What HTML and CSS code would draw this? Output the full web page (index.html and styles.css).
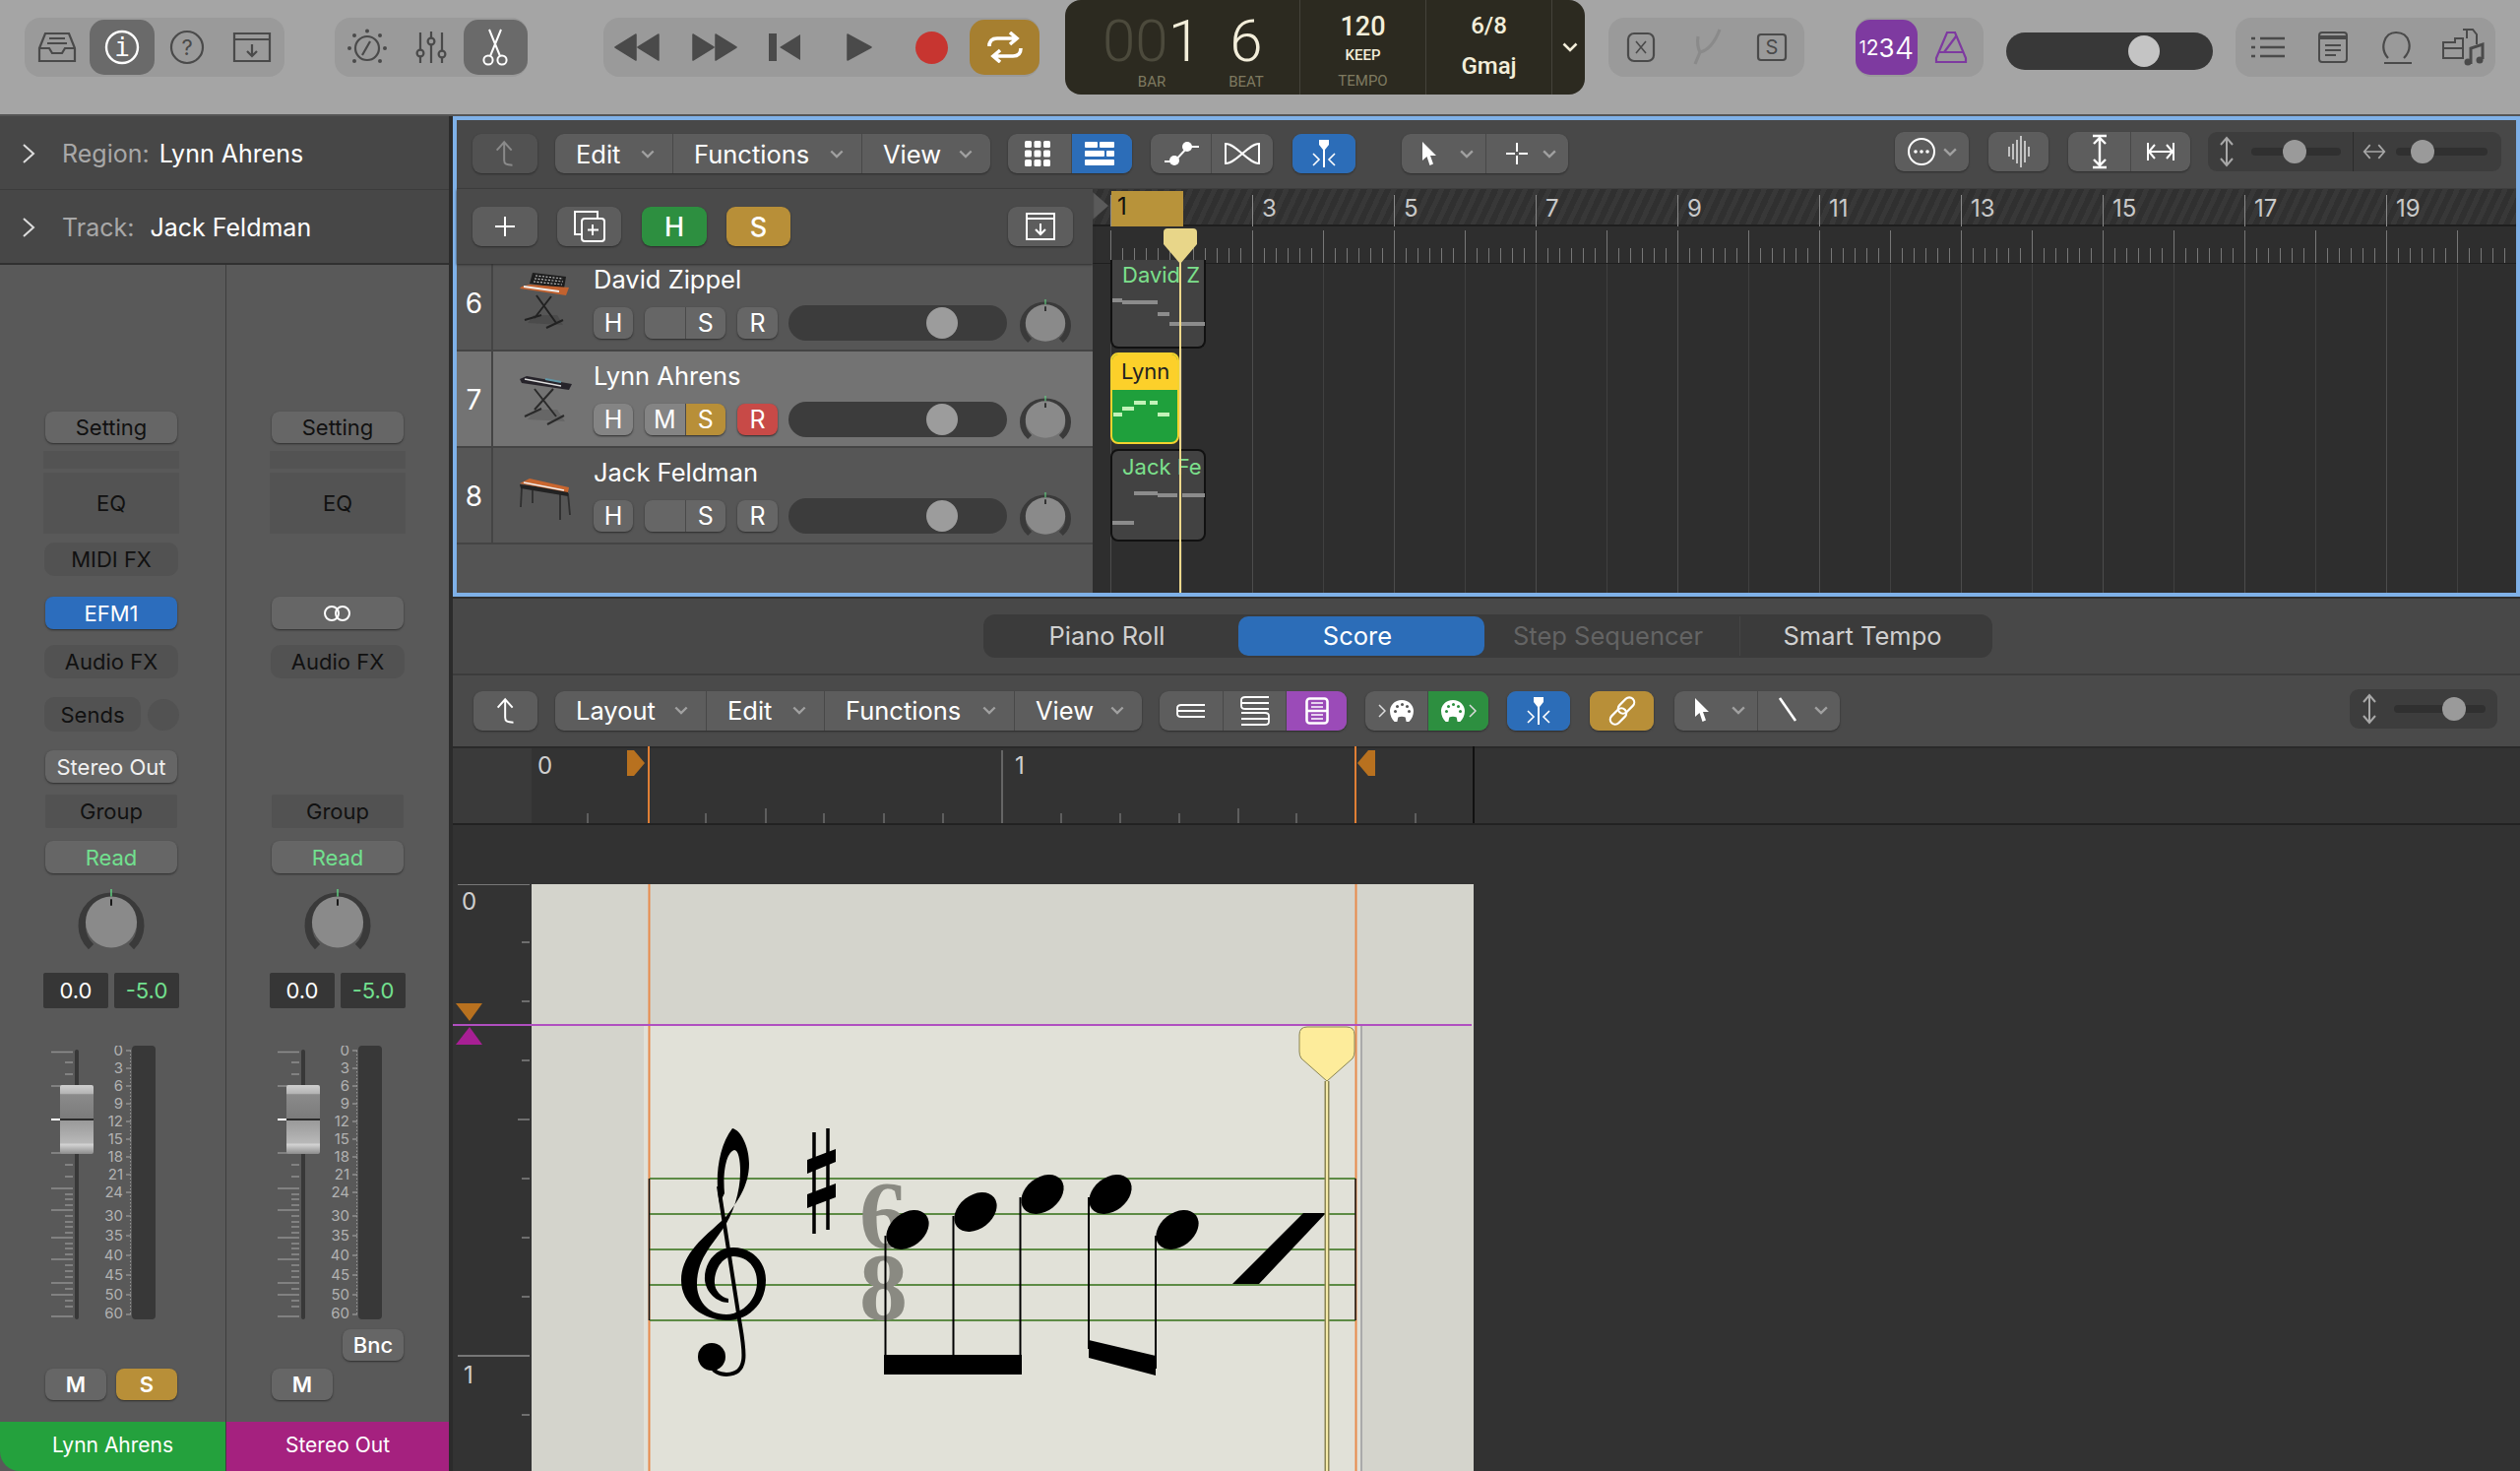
FILE: index.html
```html
<!DOCTYPE html>
<html lang="en">

<head>
    <meta charset="UTF-8">
    <title>Logic Pro</title>
    <link rel="stylesheet" href="styles.css">
</head>

<body>
    <svg class="defs" width="0" height="0">
        <defs>
            <linearGradient id="cap" x1="0" y1="0" x2="0" y2="1">
                <stop offset="0" stop-color="#cfcfcf" />
                <stop offset=".12" stop-color="#b5b5b5" />
                <stop offset=".14" stop-color="#8a8a8a" />
                <stop offset=".48" stop-color="#7c7c7c" />
                <stop offset=".49" stop-color="#2c2c2c" />
                <stop offset=".51" stop-color="#2c2c2c" />
                <stop offset=".52" stop-color="#9a9a9a" />
                <stop offset=".84" stop-color="#b8b8b8" />
                <stop offset=".86" stop-color="#d4d4d4" />
                <stop offset="1" stop-color="#8c8c8c" />
            </linearGradient>
            <symbol id="chev" viewBox="0 0 16 10">
                <path d="M1.5 1.5 8 8 14.500 1.500" fill="none" stroke="currentColor" stroke-width="2.600" />
            </symbol>
            <symbol id="pointer" viewBox="0 0 16 25">
                <path d="M1 0 V19 L5.500 15 L8.500 24 L12 22.500 L9 14 H15 Z" fill="currentColor" />
            </symbol>
            <symbol id="catch" viewBox="0 0 26 28">
                <path d="M8 0 H18 V5 L14 10 V28 H12 V10 L8 5 Z" fill="currentColor" />
                <path d="M2 14 8 20 2 26 M24 14 18 20 24 26" fill="none" stroke="currentColor" stroke-width="1.600" />
            </symbol>
            <symbol id="upback" viewBox="0 0 24 32">
                <path d="M2 12 11 2 20 12 M11 2 V24 C11 29 14 30 21 30" fill="none" stroke="currentColor" stroke-width="2.400" />
            </symbol>
            <symbol id="updown" viewBox="0 0 16 32">
                <path d="M2 9 8 2 14 9 M2 23 8 30 14 23 M8 2 V30" fill="none" stroke="currentColor" stroke-width="2" />
            </symbol>
            <symbol id="leftright" viewBox="0 0 28 20">
                <path d="M9 2 2 10 9 18 M19 2 26 10 19 18 M2 10 H26" fill="none" stroke="currentColor" stroke-width="2" />
            </symbol>
            <symbol id="knob" viewBox="0 0 72 72">
                <path d="M14 63 A32 32 0 1 1 58 63" fill="none" stroke="#3a3a3a" stroke-width="8" />
                <circle cx="36" cy="36" r="28" fill="#8a8a8a" />
                <path d="M36 0 V8" stroke="#62d884" stroke-width="1.500" />
                <path d="M36 11 V18" stroke="#111" stroke-width="2" />
            </symbol>
            <symbol id="midi" viewBox="0 0 28 26">
                <path d="M14 1 C22 1 27 7 27 13 C27 18 25 22 22 25 L19 25 L18 20 C16 19 12 19 10 20 L9 25 L6 25 C3 22 1 18 1 13 C1 7 6 1 14 1 Z" fill="#fff" />
            </symbol>
        </defs>
    </svg>

    <div class="app">
        <!-- top control bar -->
        <header class="topbar">
            <div class="tgroup tg-view">
                <div class="tbtn"><svg class="ic" width="40" height="32" viewBox="0 0 40 32"><path d="M2 17 8 2 H32 L38 17 V30 H2 Z M2 17 H12 L15 22 H25 L28 17 H38 M12 7 H28 M10 12 H30" fill="none" stroke="currentColor" stroke-width="2.200" /></svg></div>
                <div class="tbtn active"><svg width="36" height="36" viewBox="0 0 36 36"><circle cx="18" cy="18" r="16" fill="none" stroke="#fff" stroke-width="2.400" /><text x="18" y="27" class="svgtxt mono">i</text></svg></div>
                <div class="tbtn"><svg class="ic" width="36" height="36" viewBox="0 0 36 36"><circle cx="18" cy="18" r="16" fill="none" stroke="currentColor" stroke-width="2.200" /><text x="18" y="26" class="svgtxt q">?</text></svg></div>
                <div class="tbtn"><svg class="ic" width="40" height="32" viewBox="0 0 40 32"><path d="M2 2 H38 V30 H2 Z M2 8 H38 M20 13 V25 M15 20 20 25 25 20" fill="none" stroke="currentColor" stroke-width="2.200" /></svg></div>
            </div>
            <div class="tgroup tg-tools">
                <div class="tbtn"><svg class="ic" width="42" height="38" viewBox="0 0 42 38"><circle cx="21" cy="20" r="12" fill="none" stroke="currentColor" stroke-width="2.200" /><path d="M16 27 24 13" stroke="currentColor" stroke-width="2.200" /><g fill="currentColor"><circle cx="21" cy="2.500" r="2" /><circle cx="8" cy="7" r="2" /><circle cx="34" cy="7" r="2" /><circle cx="3" cy="20" r="2" /><circle cx="39" cy="20" r="2" /><circle cx="8" cy="33" r="2" /><circle cx="34" cy="33" r="2" /></g></svg></div>
                <div class="tbtn"><svg class="ic" width="32" height="34" viewBox="0 0 32 34"><g fill="none" stroke="currentColor" stroke-width="2.200"><path d="M5 2 V19 M5 27 V33 M16 1 V8 M16 15 V33 M27 2 V21 M27 28 V33" /><circle cx="5" cy="23" r="3.400" /><circle cx="16" cy="11" r="3.400" /><circle cx="27" cy="24" r="3.400" /></g></svg></div>
                <div class="tbtn active"><svg width="26" height="38" viewBox="0 0 26 38"><g fill="none" stroke="#fff" stroke-width="2"><circle cx="6" cy="32" r="4.600" /><circle cx="20" cy="32" r="4.600" /><path d="M8 28 19 1 M18 28 7 1" /></g></svg></div>
            </div>
            <div class="tgroup tg-transport">
                <div class="tbtn t1"><svg class="ic" width="46" height="28" viewBox="0 0 46 28"><path d="M22 1 1 14 22 27 Z M45 1 24 14 45 27 Z" fill="currentColor" stroke="currentColor" stroke-width="1.500" stroke-linejoin="round" /></svg></div>
                <div class="tbtn t2"><svg class="ic" width="46" height="28" viewBox="0 0 46 28"><path d="M1 1 22 14 1 27 Z M24 1 45 14 24 27 Z" fill="currentColor" stroke="currentColor" stroke-width="1.500" stroke-linejoin="round" /></svg></div>
                <div class="tbtn t3"><svg class="ic" width="34" height="28" viewBox="0 0 34 28"><path d="M1 0 H9 V28 H1 Z M33 1 12 14 33 27 Z" fill="currentColor" /></svg></div>
                <div class="tbtn t4"><svg class="ic" width="26" height="28" viewBox="0 0 26 28"><path d="M1 1 25 14 1 27 Z" fill="currentColor" stroke="currentColor" stroke-width="1.500" stroke-linejoin="round" /></svg></div>
                <div class="tbtn t5"><div class="rec"></div></div>
                <div class="tbtn t6"><svg width="38" height="32" viewBox="0 0 38 32"><path d="M3 15 C3 10 5 7 11 7 H29 M3 15 V12 M35 17 C35 22 33 25 27 25 H9 M24 1 31 7 24 13 M14 19 7 25 14 31" fill="none" stroke="#fff" stroke-width="3.600" /></svg></div>
            </div>

            <div class="lcd">
                <div class="lcd-pos">
                    <div class="lcd-col lcd-bar">
                        <div class="lcd-big"><span class="dim">00</span>1</div>
                        <div class="lcd-lab">BAR</div>
                    </div>
                    <div class="lcd-col lcd-beat">
                        <div class="lcd-big">6</div>
                        <div class="lcd-lab">BEAT</div>
                    </div>
                </div>
                <div class="lcd-cell">
                    <div class="lcd-val">120</div>
                    <div class="lcd-keep">KEEP</div>
                    <div class="lcd-lab">TEMPO</div>
                </div>
                <div class="lcd-cell sig">
                    <div class="lcd-val small">6/8</div>
                    <div class="lcd-val small">Gmaj</div>
                </div>
                <div class="lcd-more"><svg width="16" height="10"><use href="#chev" /></svg></div>
            </div>

            <div class="tgroup tg-mode">
                <div class="tbtn"><svg class="ic" width="30" height="32" viewBox="0 0 30 32"><rect x="2" y="2" width="26" height="28" rx="6" fill="none" stroke="currentColor" stroke-width="2.200" /><path d="M10 10 20 22 M20 10 10 22" stroke="currentColor" stroke-width="1.600" /></svg></div>
                <div class="tbtn off"><svg width="34" height="38" viewBox="0 0 34 38"><path d="M6 36 11 24 M11 24 C8 18 8 14 9 8 M11 24 C20 22 26 14 31 1" fill="none" stroke="#8a8a8a" stroke-width="3.200" /></svg></div>
                <div class="tbtn"><svg class="ic" width="32" height="30" viewBox="0 0 32 30"><rect x="2" y="2" width="28" height="26" rx="3" fill="none" stroke="currentColor" stroke-width="2.200" /><text x="16" y="22" class="svgtxt s">S</text></svg></div>
            </div>
            <div class="tgroup tg-count">
                <div class="count"><span class="c1">1</span><span class="c2">2</span><span class="c3">3</span><span class="c4">4</span></div>
                <div class="metro"><svg width="34" height="34" viewBox="0 0 34 34"><path d="M2 32 H32 V28 L21 2 H13 L2 28 Z M4 22 H30 M10 22 22 6" fill="none" stroke="#7e3aa0" stroke-width="2.200" /></svg></div>
            </div>
            <div class="master">
                <div class="master-knob"></div>
            </div>
            <div class="tgroup tg-lists">
                <div class="tbtn"><svg class="ic" width="34" height="24" viewBox="0 0 34 24"><g stroke="currentColor" stroke-width="2.400"><path d="M9 3 H34 M9 12 H34 M9 21 H34" /><path d="M0 3 H4 M0 12 H4 M0 21 H4" /></g></svg></div>
                <div class="tbtn"><svg class="ic" width="30" height="32" viewBox="0 0 30 32"><rect x="1" y="1" width="28" height="30" rx="3" fill="none" stroke="currentColor" stroke-width="2" /><path d="M1 4 H29 V8 H1 Z" fill="currentColor" /><path d="M7 14 H23 M7 19 H23 M7 24 H18" stroke="currentColor" stroke-width="2" /></svg></div>
                <div class="tbtn"><svg class="ic" width="36" height="34" viewBox="0 0 36 34"><path d="M8 28 C-1 18 4 2 16 2 C30 2 34 18 24 28 M4 33 H32" fill="none" stroke="currentColor" stroke-width="2.200" /></svg></div>
                <div class="tbtn"><svg class="ic" width="46" height="38" viewBox="0 0 44 38"><path d="M2 14 H14 V10 H22 V30 H2 Z M2 20 H22 M22 1 H32 L36 6 V16 M26 1 V10" fill="none" stroke="currentColor" stroke-width="2" /><path d="M30 36 V20 L42 16 V31" fill="none" stroke="currentColor" stroke-width="3" /><circle cx="27" cy="34" r="3.500" fill="currentColor" /><circle cx="39" cy="32" r="3.500" fill="currentColor" /></svg></div>
            </div>
        </header>

        <div class="main">
            <!-- inspector + channel strips -->
            <aside class="sidebar">
                <div class="insp-row">
                    <svg width="14" height="22" viewBox="0 0 14 22"><path d="M2 2 12 11 2 20" fill="none" stroke="#ddd" stroke-width="2" /></svg>
                    <span class="insp-lab">Region:</span><span class="insp-val">Lynn Ahrens</span>
                </div>
                <div class="insp-row track">
                    <svg width="14" height="22" viewBox="0 0 14 22"><path d="M2 2 12 11 2 20" fill="none" stroke="#ddd" stroke-width="2" /></svg>
                    <span class="insp-lab">Track:</span><span class="insp-val gap">Jack Feldman</span>
                </div>
                <div class="strips">
                    <section class="strip first">
                        <div class="ch-btn setting">Setting</div>
                        <div class="ch-slot"></div>
                        <div class="ch-eq">EQ</div>
                        <div class="ch-empty midi">MIDI FX</div>
                        <div class="ch-btn blue efm">EFM1</div>
                        <div class="ch-empty afx">Audio FX</div>
                        <div class="sends">
                            <div class="ch-empty">Sends</div>
                            <div class="send-dot"></div>
                        </div>
                        <div class="ch-btn out">Stereo Out</div>
                        <div class="ch-empty grp">Group</div>
                        <div class="ch-btn read">Read</div>
                        <svg class="pan" width="72" height="72"><use href="#knob" /></svg>
                        <div class="vals">
                            <div class="val">0.0</div>
                            <div class="val green">-5.0</div>
                        </div>
                        <svg class="fader" width="138" height="278" viewBox="44 1062 138 278">
                            <path class="ft" d="M52 1068.5H74M66 1079H74M66 1091H74M52 1103H74M52 1171H74M66 1183H74M66 1195H74M52 1207H74M66 1213H74M66 1218H74M66 1224H74M52 1229H74M66 1235H74M66 1241H74M66 1246H74M66 1252H74M52 1257H74M66 1263H74M66 1268H74M66 1274H74M52 1279H74M66 1285H74M66 1291H74M66 1297H74M52 1303H74M66 1309H74M52 1315H74M66 1321H74M66 1327H74M52 1337H74" />
                            <rect x="76" y="1066" width="4" height="274" rx="2" fill="#383838" />
                            <rect x="61" y="1102" width="34" height="70" rx="2" fill="url(#cap)" />
                            <path d="M52 1137H61" stroke="#fff" stroke-width="2" />
                            <g class="mt"><text x="125" y="1072">0</text><text x="125" y="1090">3</text><text x="125" y="1108">6</text><text x="125" y="1126">9</text><text x="125" y="1144">12</text><text x="125" y="1162">15</text><text x="125" y="1180">18</text><text x="125" y="1198">21</text><text x="125" y="1216">24</text><text x="125" y="1240">30</text><text x="125" y="1260">35</text><text x="125" y="1280">40</text><text x="125" y="1300">45</text><text x="125" y="1320">50</text><text x="125" y="1339">60</text></g>
                            <path class="ft" d="M128 1067H133M128 1085H133M128 1103H133M128 1121H133M128 1139H133M128 1157H133M128 1175H133M128 1193H133M128 1211H133M128 1235H133M128 1255H133M128 1275H133M128 1295H133M128 1315H133M128 1335H133" />
                            <path d="M132.500 1067V1335" stroke="#999" stroke-dasharray="1.500 2" />
                            <rect x="134" y="1062" width="24" height="278" rx="4" fill="#383838" />
                        </svg>
                        <div class="ch-btn bnc hide"></div>
                        <div class="ms">
                            <div class="ch-btn">M</div>
                            <div class="ch-btn gold">S</div>
                        </div>
                        <div class="ch-name green-bg">Lynn Ahrens</div>
                    </section>
                    <section class="strip">
                        <div class="ch-btn setting">Setting</div>
                        <div class="ch-slot"></div>
                        <div class="ch-eq">EQ</div>
                        <div class="ch-empty midi hide"></div>
                        <div class="ch-btn efm"><svg width="34" height="18" viewBox="0 0 34 18"><g fill="none" stroke="#fff" stroke-width="2"><circle cx="11" cy="9" r="7" /><circle cx="22" cy="9" r="7" /></g></svg></div>
                        <div class="ch-empty afx">Audio FX</div>
                        <div class="sends hide"></div>
                        <div class="ch-btn out hide"></div>
                        <div class="ch-empty grp">Group</div>
                        <div class="ch-btn read">Read</div>
                        <svg class="pan" width="72" height="72"><use href="#knob" /></svg>
                        <div class="vals">
                            <div class="val">0.0</div>
                            <div class="val green">-5.0</div>
                        </div>
                        <svg class="fader" width="138" height="278" viewBox="44 1062 138 278">
                            <path class="ft" d="M52 1068.5H74M66 1079H74M66 1091H74M52 1103H74M52 1171H74M66 1183H74M66 1195H74M52 1207H74M66 1213H74M66 1218H74M66 1224H74M52 1229H74M66 1235H74M66 1241H74M66 1246H74M66 1252H74M52 1257H74M66 1263H74M66 1268H74M66 1274H74M52 1279H74M66 1285H74M66 1291H74M66 1297H74M52 1303H74M66 1309H74M52 1315H74M66 1321H74M66 1327H74M52 1337H74" />
                            <rect x="76" y="1066" width="4" height="274" rx="2" fill="#383838" />
                            <rect x="61" y="1102" width="34" height="70" rx="2" fill="url(#cap)" />
                            <path d="M52 1137H61" stroke="#fff" stroke-width="2" />
                            <g class="mt"><text x="125" y="1072">0</text><text x="125" y="1090">3</text><text x="125" y="1108">6</text><text x="125" y="1126">9</text><text x="125" y="1144">12</text><text x="125" y="1162">15</text><text x="125" y="1180">18</text><text x="125" y="1198">21</text><text x="125" y="1216">24</text><text x="125" y="1240">30</text><text x="125" y="1260">35</text><text x="125" y="1280">40</text><text x="125" y="1300">45</text><text x="125" y="1320">50</text><text x="125" y="1339">60</text></g>
                            <path class="ft" d="M128 1067H133M128 1085H133M128 1103H133M128 1121H133M128 1139H133M128 1157H133M128 1175H133M128 1193H133M128 1211H133M128 1235H133M128 1255H133M128 1275H133M128 1295H133M128 1315H133M128 1335H133" />
                            <path d="M132.500 1067V1335" stroke="#999" stroke-dasharray="1.500 2" />
                            <rect x="134" y="1062" width="24" height="278" rx="4" fill="#383838" />
                        </svg>
                        <div class="ch-btn bnc">Bnc</div>
                        <div class="ms">
                            <div class="ch-btn">M</div>
                            <div class="ch-btn hide"></div>
                        </div>
                        <div class="ch-name purple-bg">Stereo Out</div>
                    </section>
                </div>
            </aside>

            <div class="work">
                <!-- tracks area -->
                <section class="tracks">
                    <div class="bar tracks-bar">
                        <div class="btn w66 dimmed"><svg width="20" height="28"><use href="#upback" /></svg></div>
                        <div class="seg ml18">
                            <div class="menu w119">Edit<svg width="14" height="9"><use href="#chev" /></svg></div>
                            <div class="menu w192">Functions<svg width="14" height="9"><use href="#chev" /></svg></div>
                            <div class="menu w131">View<svg width="14" height="9"><use href="#chev" /></svg></div>
                        </div>
                        <div class="seg ml18">
                            <div class="cell w64 nudge"><svg width="26" height="26" viewBox="0 0 26 26" fill="#fff"><rect width="7" height="7" rx="1.500" /><rect x="9.500" width="7" height="7" rx="1.500" /><rect x="19" width="7" height="7" rx="1.500" /><rect y="9.500" width="7" height="7" rx="1.500" /><rect x="9.500" y="9.500" width="7" height="7" rx="1.500" /><rect x="19" y="9.500" width="7" height="7" rx="1.500" /><rect y="19" width="7" height="7" rx="1.500" /><rect x="9.500" y="19" width="7" height="7" rx="1.500" /><rect x="19" y="19" width="7" height="7" rx="1.500" /></svg></div>
                            <div class="cell w62 c-blue nudge"><svg width="30" height="24" viewBox="0 0 30 24" fill="#fff"><rect width="13" height="6" rx="1" /><rect x="15" width="15" height="6" rx="1" /><rect y="9" width="20" height="6" rx="1" /><rect x="22" y="9" width="8" height="6" rx="1" /><rect y="18" width="30" height="6" rx="1" /></svg></div>
                        </div>
                        <div class="seg ml19">
                            <div class="cell w61"><svg width="38" height="26" viewBox="0 0 38 26"><path d="M2 21 H12 L26 6 H37" fill="none" stroke="#fff" stroke-width="2" /><circle cx="12" cy="20" r="5" fill="#fff" /><circle cx="25" cy="6" r="5" fill="#fff" /></svg></div>
                            <div class="cell w63"><svg width="36" height="22" viewBox="0 0 36 22"><path d="M1 1 V21 C12 21 24 1 35 1 V21 C24 21 12 1 1 1 Z" fill="none" stroke="#fff" stroke-width="2" /></svg></div>
                        </div>
                        <div class="seg ml20">
                            <div class="cell w64 c-blue"><svg class="white" width="26" height="28"><use href="#catch" /></svg></div>
                        </div>
                        <div class="seg ml47">
                            <div class="menu w85 icon-menu"><svg class="white" width="16" height="25"><use href="#pointer" /></svg><svg width="16" height="9"><use href="#chev" /></svg></div>
                            <div class="menu w84 icon-menu"><svg width="22" height="22" viewBox="0 0 22 22"><path d="M11 0 V9 M11 13 V22 M0 11 H9 M13 11 H22" stroke="#fff" stroke-width="2" /></svg><svg width="16" height="9"><use href="#chev" /></svg></div>
                        </div>
                        <div class="bar-right">
                            <div class="menu btn w75 icon-menu"><svg width="30" height="30" viewBox="0 0 30 30"><circle cx="15" cy="15" r="13" fill="none" stroke="#fff" stroke-width="2" /><circle cx="9" cy="15" r="1.800" fill="#fff" /><circle cx="15" cy="15" r="1.800" fill="#fff" /><circle cx="21" cy="15" r="1.800" fill="#fff" /></svg><svg width="16" height="9"><use href="#chev" /></svg></div>
                            <div class="btn w61 ml20"><svg width="24" height="34" viewBox="0 0 24 34"><path d="M2 12V22M6 9V25M10 5V29M14 1V33M18 6V28M22 12V22" stroke="#ddd" stroke-width="1.600" /></svg></div>
                            <div class="seg ml20">
                                <div class="cell w63"><svg width="22" height="36" viewBox="0 0 22 36"><path d="M4 2H18M4 34H18M11 2V34M5 10 11 4 17 10M5 26 11 32 17 26" fill="none" stroke="#fff" stroke-width="2.400" /></svg></div>
                                <div class="cell w61"><svg width="30" height="22" viewBox="0 0 30 22"><path d="M2 2V20M28 2V20M2 11H28M9 4 3 11 9 18M21 4 27 11 21 18" fill="none" stroke="#fff" stroke-width="2" /></svg></div>
                            </div>
                            <div class="zoomers ml18">
                                <div class="zoomer z1">
                                    <svg class="grey" width="16" height="32"><use href="#updown" /></svg>
                                    <div class="ztrack"><div class="zknob"></div></div>
                                </div>
                                <div class="zoomer z2">
                                    <svg class="grey" width="24" height="18"><use href="#leftright" /></svg>
                                    <div class="ztrack"><div class="zknob"></div></div>
                                </div>
                            </div>
                        </div>
                    </div>

                    <div class="tracks-body">
                        <div class="headers">
                            <div class="addbar">
                                <div class="btn w66"><svg width="22" height="22" viewBox="0 0 22 22"><path d="M11 1V21M1 11H21" stroke="#fff" stroke-width="2" /></svg></div>
                                <div class="btn w65 ml20"><svg width="34" height="34" viewBox="0 0 34 34"><g fill="none" stroke="#fff" stroke-width="2"><path d="M8 25 H2 V2 H25 V9" /><rect x="9" y="9" width="23" height="23" rx="3" /><path d="M20 15V26M15 20.500H26" /></g></svg></div>
                                <div class="btn w66 c-green ml21 big">H</div>
                                <div class="btn w65 c-gold ml20 big">S</div>
                                <div class="btn w66 add-last"><svg width="32" height="30" viewBox="0 0 32 30"><path d="M2 2H30V28H2ZM2 7H30M16 12V23M11 18 16 23 21 18" fill="none" stroke="#fff" stroke-width="2" /></svg></div>
                            </div>
                            <div class="rows">
                                <div class="row first">
                                    <div class="num">6</div>
                                    <svg class="inst" width="60" height="70" viewBox="0 0 60 70">
                                        <path d="M14 56 50 58 44 48 20 48Z" fill="#4b4b4b" />
                                        <path d="M23 28 43 56M38 29 21 51M11 53 28 48M33 61 50 53" stroke="#222" stroke-width="2" fill="none" />
                                        <path d="M19 5 53 9 51 21 16 16Z" fill="#1d1d1d" />
                                        <path d="M22 8 50 11M21 11 50 14M20 14 49 17" stroke="#b9b9b9" stroke-width="1.200" stroke-dasharray="2 1.500" />
                                        <path d="M8 19 16 17 56 20 53 28 6 21Z" fill="#c2622f" />
                                        <path d="M10 19 46 24" stroke="#eee" stroke-width="2" />
                                    </svg>
                                    <div class="ctl">
                                        <div class="tname">David Zippel</div>
                                        <div class="ctl-row">
                                            <div class="rbtn w40">H</div>
                                            <div class="mspair"><div class="rbtn half"></div><div class="rbtn half">S</div></div>
                                            <div class="rbtn w41">R</div>
                                            <div class="vol"><div class="vol-knob"></div></div>
                                            <svg class="tknob" width="52" height="48" preserveAspectRatio="none" viewBox="0 0 72 72"><use href="#knob" /></svg>
                                        </div>
                                    </div>
                                </div>
                                <div class="row sel">
                                    <div class="num">7</div>
                                    <svg class="inst" width="60" height="70" viewBox="0 0 60 70">
                                        <path d="M14 56 52 58 44 46 22 46Z" fill="#666" />
                                        <path d="M21 25 43 53M40 25 21 46M11 53 28 45M34 61 51 52" stroke="#2a2a2a" stroke-width="2" fill="none" />
                                        <path d="M6 15 13 12 59 20 56 26 8 19Z" fill="#26232a" />
                                        <path d="M11 15 48 22" stroke="#ddd" stroke-width="1.400" />
                                        <path d="M32 15 48 18" stroke="#5f96a6" stroke-width="2" />
                                    </svg>
                                    <div class="ctl">
                                        <div class="tname">Lynn Ahrens</div>
                                        <div class="ctl-row">
                                            <div class="rbtn w40">H</div>
                                            <div class="mspair"><div class="rbtn half">M</div><div class="rbtn half c-gold">S</div></div>
                                            <div class="rbtn w41 c-red">R</div>
                                            <div class="vol"><div class="vol-knob"></div></div>
                                            <svg class="tknob" width="52" height="48" preserveAspectRatio="none" viewBox="0 0 72 72"><use href="#knob" /></svg>
                                        </div>
                                    </div>
                                </div>
                                <div class="row">
                                    <div class="num">8</div>
                                    <svg class="inst" width="60" height="70" viewBox="0 0 60 70">
                                        <path d="M8 27 7 47M55 33 57 55M47 33 47 60M19 30 19 43" stroke="#2f2f2f" stroke-width="1.800" />
                                        <path d="M6 24 55 30 55 36 7 28Z" fill="#222" />
                                        <path d="M8 22 16 18 56 27 55 32 6 23Z" fill="#c9662f" />
                                        <path d="M10 22 51 30" stroke="#eee" stroke-width="1.600" />
                                    </svg>
                                    <div class="ctl">
                                        <div class="tname">Jack Feldman</div>
                                        <div class="ctl-row">
                                            <div class="rbtn w40">H</div>
                                            <div class="mspair"><div class="rbtn half"></div><div class="rbtn half">S</div></div>
                                            <div class="rbtn w41">R</div>
                                            <div class="vol"><div class="vol-knob"></div></div>
                                            <svg class="tknob" width="52" height="48" preserveAspectRatio="none" viewBox="0 0 72 72"><use href="#knob" /></svg>
                                        </div>
                                    </div>
                                </div>
                            </div>
                        </div>

                        <div class="timeline">
                            <div class="ruler-top">
                                <div class="rbar">1</div><div class="rbar">3</div><div class="rbar">5</div><div class="rbar">7</div><div class="rbar">9</div><div class="rbar">11</div><div class="rbar">13</div><div class="rbar">15</div><div class="rbar">17</div><div class="rbar">19</div>
                            </div>
                            <div class="ruler-low"></div>
                            <div class="lanes"></div>

                            <!-- things that sit on the timeline -->
                            <div class="cycle">1</div>
                            <div class="cycle-tip"></div>
                            <div class="region david">David Z</div>
                            <div class="region lynn"><div class="lynn-head">Lynn</div></div>
                            <div class="region jack">Jack Fe</div>
                            <svg class="dashes" width="120" height="300" viewBox="1110 268 120 300">
                                <g fill="#8c8c8c"><rect x="1130" y="303" width="10" height="4" /><rect x="1140" y="305" width="36" height="4" /><rect x="1176" y="317" width="12" height="4" /><rect x="1188" y="327" width="36" height="4" /><rect x="1152" y="499" width="24" height="4" /><rect x="1176" y="501" width="20" height="4" /><rect x="1201" y="501" width="23" height="4" /><rect x="1130" y="529" width="22" height="4" /></g>
                                <g fill="#c2f2b8"><rect x="1131" y="419" width="9" height="4" /><rect x="1140" y="413" width="12" height="4" /><rect x="1152" y="407" width="12" height="4" /><rect x="1168" y="407" width="8" height="4" /><rect x="1176" y="419" width="12" height="4" /></g>
                            </svg>
                            <div class="playline"></div>
                            <svg class="playhead" width="34" height="36" viewBox="0 0 34 36"><path d="M4 0 H30 Q34 0 34 4 V16 L17 36 L0 16 V4 Q0 0 4 0 Z" fill="#e8d689" /></svg>
                        </div>
                    </div>
                </section>

                <!-- score editor -->
                <section class="editor">
                    <div class="tabs-wrap">
                        <div class="tabs">
                            <div class="tab w259">Piano Roll</div>
                            <div class="tab w250 on">Score</div>
                            <div class="tab w259 off">Step Sequencer</div>
                            <div class="tab w257 line">Smart Tempo</div>
                        </div>
                    </div>
                    <div class="bar score-bar">
                        <div class="btn w65"><svg class="white" width="20" height="28"><use href="#upback" /></svg></div>
                        <div class="seg ml18">
                            <div class="menu w153">Layout<svg width="14" height="9"><use href="#chev" /></svg></div>
                            <div class="menu w120">Edit<svg width="14" height="9"><use href="#chev" /></svg></div>
                            <div class="menu w193">Functions<svg width="14" height="9"><use href="#chev" /></svg></div>
                            <div class="menu w130">View<svg width="14" height="9"><use href="#chev" /></svg></div>
                        </div>
                        <div class="seg ml18">
                            <div class="cell w64"><svg width="30" height="14" viewBox="0 0 30 14"><path d="M29 1H5Q1 1 1 4V10Q1 13 5 13H29M1 7H29" fill="none" stroke="#fff" stroke-width="1.800" /></svg></div>
                            <div class="cell w64"><svg width="30" height="30" viewBox="0 0 30 30"><path d="M29 1H5Q1 1 1 4V10Q1 13 5 13H29M1 7H29M1 17H25Q29 17 29 20V26Q29 29 25 29H1M1 23H29" fill="none" stroke="#fff" stroke-width="1.800" /></svg></div>
                            <div class="cell w62 c-purple"><svg width="24" height="28" viewBox="0 0 24 28"><rect x="1.500" y="1.500" width="21" height="25" rx="3" fill="none" stroke="#fff" stroke-width="2.600" /><path d="M2 14H22" stroke="#fff" stroke-width="2.600" /><path d="M6 6H18M6 10H18M6 18H18M6 22H18" stroke="#fff" stroke-width="1.400" /></svg></div>
                        </div>
                        <div class="seg ml19">
                            <div class="cell w63"><svg width="8" height="14" viewBox="0 0 8 14"><path d="M1 1 7 7 1 13" fill="none" stroke="#ddd" stroke-width="1.500" /></svg><div class="din"><svg width="26" height="24"><use href="#midi" /></svg><i></i></div></div>
                            <div class="cell w62 c-green"><div class="din"><svg width="26" height="24"><use href="#midi" /></svg><i></i></div><svg width="8" height="14" viewBox="0 0 8 14"><path d="M1 1 7 7 1 13" fill="none" stroke="#ddd" stroke-width="1.500" /></svg></div>
                        </div>
                        <div class="seg ml19">
                            <div class="cell w64 c-blue"><svg class="white" width="26" height="28"><use href="#catch" /></svg></div>
                        </div>
                        <div class="seg ml20">
                            <div class="cell w65 c-gold"><svg width="30" height="30" viewBox="0 0 30 30"><g fill="none" stroke="#fff" stroke-width="2.200"><rect x="14" y="0" width="10" height="19" rx="5" transform="rotate(45 19 9.500)" /><rect x="6" y="11" width="10" height="19" rx="5" transform="rotate(45 11 20.500)" /></g></svg></div>
                        </div>
                        <div class="seg ml21">
                            <div class="menu w84 icon-menu"><svg class="white" width="16" height="25"><use href="#pointer" /></svg><svg width="16" height="9"><use href="#chev" /></svg></div>
                            <div class="menu w84 icon-menu"><svg width="22" height="26" viewBox="0 0 22 26"><path d="M2 1 18 24" stroke="#fff" stroke-width="2.600" /></svg><svg width="16" height="9"><use href="#chev" /></svg></div>
                        </div>
                        <div class="zoomers single">
                            <div class="zoomer z3">
                                <svg class="grey" width="16" height="32"><use href="#updown" /></svg>
                                <div class="ztrack"><div class="zknob"></div></div>
                            </div>
                        </div>
                    </div>

                    <div class="score-top">
                        <div class="score-corner"></div>
                        <svg class="score-ruler" width="958" height="80" viewBox="540 758 958 80">
                            <path d="M1018 762V836" stroke="#777" stroke-width="1.500" />
                            <path d="M597 826V836M717 826V836M778 821V836M837 826V836M898 826V836M958 826V836M1078 826V836M1138 826V836M1198 826V836M1258 821V836M1317 826V836M1438 826V836" stroke="#6e6e6e" stroke-width="1.500" />
                            <path d="M659 758V836M1377 758V836" stroke="#e07f35" stroke-width="2" />
                            <path d="M637 762 L644 762 L655 775 L644 788 L637 788 Z" fill="#b8711f" />
                            <path d="M1397 762 L1390 762 L1379 775 L1390 788 L1397 788 Z" fill="#b8711f" />
                            <path d="M1497 758V836" stroke="#111" stroke-width="2" />
                            <text x="546" y="786" class="rlab">0</text>
                            <text x="1031" y="786" class="rlab">1</text>
                        </svg>
                    </div>
                    <div class="score-gap"></div>

                    <div class="score-main">
                        <svg class="sheet" width="1037" height="596" viewBox="460 898 1037 596">
                            <!-- side ruler -->
                            <rect x="460" y="898" width="80" height="596" fill="#333" />
                            <path d="M465 898H538M465 1377H538" stroke="#777" stroke-width="2" />
                            <path d="M530 957H538M530 1017H538M530 1077H538M526 1137H538M530 1197H538M530 1257H538M530 1317H538M530 1437H538" stroke="#6e6e6e" stroke-width="2" />
                            <text x="469" y="924" class="rlab">0</text>
                            <text x="471" y="1405" class="rlab">1</text>
                            <path d="M463 1019H490L477 1037Z" fill="#b8711f" />
                            <path d="M463 1061H490L477 1043Z" fill="#a81f94" />

                            <!-- page -->
                            <rect x="540" y="898" width="957" height="596" fill="#d4d4cc" />
                            <rect x="654" y="1041" width="729" height="453" fill="#e1e1d8" />
                            <path d="M1383 1041V1494" stroke="#aaa" stroke-width="2" />
                            <path d="M659.500 898V1494M1377.500 898V1494" stroke="#e88a4a" stroke-width="2" />
                            <path d="M460 1041H1495" stroke="#b04fc0" stroke-width="2" />

                            <!-- staff -->
                            <path d="M660 1197H1377M660 1233H1377M660 1269H1377M660 1305H1377M660 1341H1377" stroke="#5d8b45" stroke-width="2" />
                            <path d="M659.500 1197V1341M1377 1197V1341" stroke="#111" stroke-width="1.500" />

                            <!-- clef -->
                            <path d="M744 1146 C753 1148 761 1165 761 1182 C761 1205 748 1222 738 1235 C722 1252 692 1270 692 1300 C692 1325 715 1341 738 1341 C760 1341 778 1325 778 1300 C778 1280 762 1267 745 1267 C725 1267 715 1285 716 1300 C717 1312 728 1323 740 1323 L740 1319 C732 1317 725 1310 726 1300 C727 1287 735 1276 745 1276 C758 1276 769 1286 769 1302 C769 1322 752 1335 738 1335 C718 1335 708 1320 708 1304 C708 1280 722 1266 733 1250 C745 1234 752 1210 752 1190 C752 1178 750 1168 746 1168 C738 1170 734 1190 736 1212 L731 1222 C726 1200 729 1165 744 1146 Z" fill="#000" />
                            <path d="M730 1205 L751 1340 C756 1370 762 1396 738 1396 C730 1396 724 1392 722 1386" fill="none" stroke="#000" stroke-width="4" />
                            <circle cx="723" cy="1378" r="14" fill="#000" />

                            <!-- sharp -->
                            <path d="M827 1150V1253M841 1146V1249" stroke="#000" stroke-width="3.500" />
                            <path d="M820 1178 849 1167V1180L820 1192ZM820 1213 849 1202V1216L820 1227Z" fill="#000" />

                            <!-- time signature -->
                            <text x="873" y="1267" class="tsig">6</text>
                            <text x="873" y="1340" class="tsig">8</text>

                            <!-- notes -->
                            <g fill="#000">
                                <ellipse cx="922" cy="1249" rx="24" ry="17" transform="rotate(-38 922 1249)" />
                                <ellipse cx="991" cy="1231" rx="24" ry="17" transform="rotate(-38 991 1231)" />
                                <ellipse cx="1059" cy="1213" rx="24" ry="17" transform="rotate(-38 1059 1213)" />
                                <ellipse cx="1128" cy="1213" rx="24" ry="17" transform="rotate(-38 1128 1213)" />
                                <ellipse cx="1196" cy="1249" rx="24" ry="17" transform="rotate(-38 1196 1249)" />
                                <rect x="898" y="1376" width="140" height="20" />
                                <path d="M1106 1361 1174 1377V1397L1106 1379Z" />
                                <path d="M1324 1232H1347L1279 1304H1252Z" />
                            </g>
                            <path d="M899.500 1255V1380M968.500 1235V1380M1036.500 1216V1380M1106 1216V1370M1174 1255V1390" stroke="#000" stroke-width="2" />

                            <!-- playhead -->
                            <path d="M1348 1098V1494" stroke="#8a8452" stroke-width="5" />
                            <path d="M1348 1098V1494" stroke="#f5eaa8" stroke-width="2" />
                            <path d="M1328 1043 H1368 Q1376 1043 1376 1051 V1068 Q1376 1072 1374 1075 L1348 1098 L1322 1075 Q1320 1072 1320 1068 V1051 Q1320 1043 1328 1043 Z" fill="#fdec9b" stroke="#8a8452" />
                        </svg>
                        <div class="score-rest"></div>
                    </div>
                </section>
            </div>
        </div>
    </div>
</body>

</html>
```

FILE: styles.css
```css
html, body {
    margin: 0;
    padding: 0;
    background: #222;
}

body {
    width: 2560px;
    height: 1494px;
    overflow: hidden;
    font-family: "Inter", "Liberation Sans", sans-serif;
    color: #fff;
}

.defs {
    position: absolute;
}

.app {
    display: flex;
    flex-direction: column;
    height: 1494px;
}

/* top control bar */
.topbar {
    display: flex;
    align-items: flex-start;
    flex: none;
    box-sizing: border-box;
    height: 118px;
    padding: 18px 0 0 25px;
    background: #a5a5a5;
    border-bottom: 2px solid #555;
}

.tgroup {
    display: flex;
    height: 60px;
    background: #9a9a9a;
    border-radius: 16px;
}

.tg-view { width: 264px; }
.tg-tools { width: 196px; margin-left: 51px; }
.tg-transport { width: 443px; margin-left: 77px; }
.tg-mode { width: 199px; margin-left: 24px; }
.tg-count { width: 130px; margin-left: 52px; }
.tg-lists { width: 264px; margin-left: 23px; }

.tbtn {
    flex: 1;
    display: flex;
    align-items: center;
    justify-content: center;
    margin: 2px 0;
    border-radius: 15px;
}

.tbtn.active {
    background: #6a6a6a;
}

.ic {
    color: #4a4a4a;
}

.svgtxt {
    text-anchor: middle;
    fill: #4a4a4a;
}

.svgtxt.mono {
    fill: #fff;
    font: 26px "DejaVu Sans Mono", monospace;
}

.svgtxt.q {
    font: 22px "Inter", sans-serif;
}

.svgtxt.s {
    font: 20px "Inter", sans-serif;
}

.t1 { flex: none; width: 68px; }
.t2 { flex: none; width: 90px; }
.t3 { flex: none; width: 52px; }
.t4 { flex: none; width: 100px; }
.t5 { flex: none; width: 46px; }
.t6 { flex: none; width: 71px; margin-left: 16px; background: #a67f30; }

.rec {
    width: 33px;
    height: 33px;
    border-radius: 50%;
    background: #c73530;
}

.lcd {
    display: flex;
    width: 528px;
    height: 96px;
    margin: -18px 0 0 26px;
    background: #2c2a20;
    border-radius: 16px;
    color: #f3eeda;
    font-family: "Roboto", "Liberation Sans", sans-serif;
}

.lcd-pos {
    display: flex;
    width: 239px;
    box-sizing: border-box;
    padding-left: 28px;
    border-right: 1px solid #45433a;
}

.lcd-col {
    display: flex;
    flex-direction: column;
    align-items: center;
}

.lcd-bar { width: 120px; }
.lcd-beat { width: 72px; }

.lcd-big {
    height: 66px;
    margin-top: 9px;
    font-size: 60px;
    font-weight: 300;
    line-height: 66px;
}

.lcd-big .dim {
    color: #4c4a3c;
}

.lcd-lab {
    color: #7f7a60;
    font-size: 15px;
    line-height: 16px;
}

.lcd-cell {
    display: flex;
    flex-direction: column;
    align-items: center;
    width: 128px;
    box-sizing: border-box;
    padding-top: 11px;
    border-right: 1px solid #45433a;
}

.lcd-val {
    font-size: 27px;
    line-height: 32px;
    font-weight: 500;
}

.lcd-keep {
    margin-top: 5px;
    font-size: 15px;
    line-height: 17px;
    font-weight: 500;
}

.lcd-cell .lcd-lab {
    margin-top: 9px;
}

.lcd-cell.sig {
    padding-top: 12px;
    gap: 13px;
}

.lcd-val.small {
    font-size: 24px;
    line-height: 28px;
}

.lcd-more {
    flex: 1;
    display: flex;
    align-items: center;
    justify-content: center;
    padding-left: 2px;
}

.count {
    display: flex;
    align-items: center;
    justify-content: center;
    width: 63px;
    height: 56px;
    margin-top: 2px;
    background: #7e3aa0;
    border-radius: 15px;
}

.c1 { font-size: 17px; }
.c2 { font-size: 21px; }
.c3 { font-size: 26px; }
.c4 { font-size: 31px; font-weight: 300; }

.metro {
    flex: 1;
    display: flex;
    align-items: center;
    justify-content: center;
}

.master {
    position: relative;
    width: 210px;
    height: 38px;
    margin: 15px 0 0 23px;
    background: #383838;
    border-radius: 19px;
}

.master-knob {
    position: absolute;
    left: 124px;
    top: 3px;
    width: 32px;
    height: 32px;
    border-radius: 50%;
    background: #c4c4c4;
}

/* main area */
.main {
    display: flex;
    flex: 1;
    min-height: 0;
}

.sidebar {
    display: flex;
    flex-direction: column;
    width: 460px;
    flex: none;
    box-sizing: border-box;
    border-right: 4px solid #2b2b2b;
    background: #595959;
}

.insp-row {
    display: flex;
    align-items: center;
    height: 75px;
    box-sizing: border-box;
    padding: 2px 0 0 22px;
    background: #474747;
    border-bottom: 1px solid #3c3c3c;
    font-size: 25px;
}

.insp-row.track {
    height: 76px;
    border-bottom: 2px solid #303030;
}

.insp-lab {
    margin-left: 27px;
    color: #a8a8a8;
}

.insp-val {
    margin-left: 10px;
}

.insp-val.gap {
    margin-left: 16px;
}

.strips {
    display: flex;
    flex: 1;
}

.strip {
    display: flex;
    flex-direction: column;
    width: 230px;
    box-sizing: border-box;
    padding: 149px 0 0 44px;
    flex: 1;
    font-size: 22px;
    color: #111;
}

.strip.first {
    flex: none;
    border-right: 1px solid #3e3e3e;
}

.strip > * {
    flex: none;
}

.ch-btn {
    display: flex;
    align-items: center;
    justify-content: center;
    width: 134px;
    height: 33px;
    margin-left: 2px;
    background: #666;
    border-radius: 8px;
    box-shadow: 0 1px 2px #2e2e2e;
}

.ch-empty {
    display: flex;
    align-items: center;
    justify-content: center;
    width: 136px;
    height: 34px;
    margin-left: 1px;
    background: #525252;
    border-radius: 10px;
}

.setting { height: 32px; }

.ch-slot {
    width: 138px;
    height: 18px;
    margin-top: 8px;
    background: #535353;
}

.ch-eq {
    display: flex;
    align-items: center;
    justify-content: center;
    width: 138px;
    height: 62px;
    margin-top: 4px;
    background: #535353;
}

.midi { margin-top: 9px; }
.efm { margin-top: 21px; }
.afx { margin-top: 16px; }

.ch-btn.blue {
    background: #2c6dbd;
    color: #fff;
}

.sends {
    display: flex;
    align-items: center;
    justify-content: space-between;
    width: 138px;
    height: 35px;
    margin-top: 19px;
}

.sends .ch-empty {
    width: 98px;
    height: 35px;
}

.send-dot {
    width: 32px;
    height: 32px;
    border-radius: 50%;
    background: #525252;
}

.out {
    margin-top: 19px;
    color: #f0f0f0;
}

.grp {
    width: 134px;
    margin: 12px 0 0 2px;
    border-radius: 2px;
}

.read {
    margin-top: 13px;
    color: #72e08f;
}

.pan {
    margin: 16px 0 0 33px;
    height: 67px;
}

.vals {
    display: flex;
    justify-content: space-between;
    width: 138px;
    margin-top: 18px;
}

.val {
    display: flex;
    align-items: center;
    justify-content: center;
    width: 66px;
    height: 36px;
    background: #363636;
    color: #fff;
    border-radius: 2px;
}

.val.green {
    color: #72e08f;
}

.fader {
    margin-top: 38px;
}

.ft {
    stroke: #8f8f8f;
    stroke-width: 1.5;
    fill: none;
}

.mt text {
    fill: #b2b2b2;
    font: 15px "Inter", sans-serif;
    text-anchor: end;
}

.bnc {
    width: 62px;
    height: 32px;
    margin: 10px 0 0 74px;
    color: #fff;
    font-weight: 500;
}

.ms {
    display: flex;
    justify-content: space-between;
    width: 134px;
    margin: 8px 0 0 2px;
}

.ms .ch-btn {
    width: 62px;
    height: 32px;
    margin: 0;
    color: #fff;
    font-weight: 600;
}

.ch-btn.gold {
    background: #b88f38;
}

.ch-name {
    display: flex;
    align-items: center;
    justify-content: center;
    box-sizing: border-box;
    height: 50px;
    margin: 22px 0 0 -44px;
    padding-bottom: 4px;
    color: #fff;
    font-size: 21px;
}

.green-bg {
    background: #24a13d;
    border-radius: 0 0 0 20px;
}

.purple-bg {
    background: #a5217f;
}

.hide {
    visibility: hidden;
}

/* right side */
.work {
    display: flex;
    flex-direction: column;
    flex: 1;
    min-width: 0;
}

.tracks {
    display: flex;
    flex-direction: column;
    flex: none;
    box-sizing: border-box;
    height: 488px;
    border: 4px solid #7fb1e8;
    background: #484848;
}

.bar {
    display: flex;
    align-items: flex-start;
    flex: none;
    box-sizing: border-box;
    background: #484848;
    font-size: 25.5px;
}

.tracks-bar {
    height: 70px;
    padding: 14px 15px 0 16px;
    border-bottom: 1px solid #3e3e3e;
}

.bar-right {
    display: flex;
    margin: -2px 0 0 auto;
}

.btn, .seg {
    display: flex;
    height: 40px;
    background: #5d5d5d;
    border-radius: 9px;
    box-shadow: 0 1px 2px #2c2c2c;
    overflow: hidden;
}

.btn {
    align-items: center;
    justify-content: center;
}

.btn.dimmed {
    background: #525252;
    color: #8a8a8a;
}

.menu {
    display: flex;
    align-items: center;
    justify-content: space-between;
    box-sizing: border-box;
    height: 40px;
    padding: 0 18px 0 21px;
    border-left: 1px solid #484848;
}

.menu:first-child {
    border-left: 0;
}

.menu svg:last-child {
    color: #a0a0a0;
}

.icon-menu {
    padding: 0 11px 0 20px;
}

.btn.icon-menu {
    padding: 0 11px 0 12px;
}

.score-bar .menu {
    padding-bottom: 2px;
}

.cell {
    display: flex;
    align-items: center;
    justify-content: center;
    gap: 3px;
    height: 40px;
    box-sizing: border-box;
    border-left: 1px solid #484848;
}

.cell:first-child {
    border-left: 0;
}

.cell.nudge {
    padding-right: 5px;
}

.white { color: #fff; }
.grey { color: #a8a8a8; }

/* midi plug, dots sit on top of the white shape */
.din {
    position: relative;
    width: 26px;
    height: 24px;
}

.din svg {
    display: block;
}

.din i {
    position: absolute;
    left: 12px;
    top: 4px;
    width: 3px;
    height: 3px;
    border-radius: 50%;
    background: #555;
    box-shadow: -5px 2px #555, 5px 2px #555, -7px 7px #555, 7px 7px #555;
}

.c-green .din i {
    background: #2d8f40;
    box-shadow: -5px 2px #2d8f40, 5px 2px #2d8f40, -7px 7px #2d8f40, 7px 7px #2d8f40;
}

.c-blue { background: #2c6db8; }
.c-green { background: #2d8f40; }
.c-gold { background: #b88f38; }
.c-red { background: #c84a47; }
.c-purple { background: #9b4bb8; }

.w40 { width: 40px; }
.w41 { width: 41px; }
.w61 { width: 61px; }
.w62 { width: 62px; }
.w63 { width: 63px; }
.w64 { width: 64px; }
.w65 { width: 65px; }
.w66 { width: 66px; }
.w75 { width: 75px; }
.w84 { width: 84px; }
.w85 { width: 85px; }
.w119 { width: 119px; }
.w120 { width: 120px; }
.w130 { width: 130px; }
.w131 { width: 131px; }
.w153 { width: 153px; }
.w192 { width: 192px; }
.w193 { width: 193px; }
.w250 { width: 250px; }
.w257 { width: 257px; }
.w259 { width: 259px; }

.ml18 { margin-left: 18px; }
.ml19 { margin-left: 19px; }
.ml20 { margin-left: 20px; }
.ml21 { margin-left: 21px; }
.ml47 { margin-left: 47px; }

.zoomers {
    display: flex;
    width: 298px;
    height: 40px;
    background: #3d3d3d;
    border-radius: 9px;
}

.zoomer {
    display: flex;
    align-items: center;
}

.z1 {
    width: 148px;
    padding-left: 11px;
    box-sizing: border-box;
    border-right: 1px solid #2c2c2c;
    gap: 17px;
}

.z2 {
    padding-left: 9px;
    gap: 10px;
}

.ztrack {
    position: relative;
    height: 8px;
    background: #303030;
    border-radius: 4px;
}

.z1 .ztrack { width: 91px; }
.z2 .ztrack { width: 93px; }
.z3 .ztrack { width: 93px; }

.zknob {
    position: absolute;
    top: -8px;
    width: 24px;
    height: 24px;
    border-radius: 50%;
    background: #9a9a9a;
}

.z1 .zknob { left: 32px; }
.z2 .zknob { left: 15px; }
.z3 .zknob { left: 49px; }

.zoomers.single {
    width: 150px;
    margin: -2px 23px 0 auto;
}

.z3 {
    padding-left: 12px;
    gap: 17px;
}

.tracks-body {
    display: flex;
    flex: 1;
    min-height: 0;
}

.headers {
    display: flex;
    flex-direction: column;
    width: 646px;
    flex: none;
    background: #545454;
}

.addbar {
    position: relative;
    z-index: 1;
    display: flex;
    align-items: center;
    flex: none;
    height: 76px;
    box-sizing: border-box;
    padding: 0 20px 0 16px;
    background: #4a4a4a;
    box-shadow: 0 1px 2px #2e2e2e;
}

.big {
    font-size: 27px;
    font-weight: 500;
}

.add-last {
    margin-left: auto;
}

.rows {
    flex: 1;
    min-height: 0;
    overflow: hidden;
}

.row {
    display: flex;
    height: 98px;
    box-sizing: border-box;
    background: #565656;
    border-bottom: 2px solid #444;
}

.row.first {
    margin-top: -9px;
}

.row.sel {
    background: #737373;
}

.num {
    display: flex;
    align-items: center;
    justify-content: center;
    width: 37px;
    box-sizing: border-box;
    padding-top: 2px;
    border-right: 2px solid #444;
    font-size: 28px;
}

.inst {
    flex: none;
    margin: 13px 0 0 21px;
}

.ctl {
    margin-left: 21px;
    padding-top: 9px;
}

.tname {
    height: 32px;
    font-size: 25.5px;
    line-height: 32px;
}

.ctl-row {
    display: flex;
    align-items: center;
    height: 48px;
    margin-top: 4px;
}

.rbtn {
    display: flex;
    align-items: center;
    justify-content: center;
    height: 32px;
    background: #666;
    border-radius: 8px;
    box-shadow: 0 1px 2px #2c2c2c;
    font-size: 25px;
}

.sel .rbtn {
    background: #848484;
}

.sel .rbtn.c-gold { background: #b88f38; }
.sel .rbtn.c-red { background: #c84a47; }

.mspair {
    display: flex;
    width: 82px;
    margin: 0 12px;
    border-radius: 8px;
    overflow: hidden;
    box-shadow: 0 1px 2px #2c2c2c;
}

.mspair .rbtn {
    flex: 1;
    border-radius: 0;
    box-shadow: none;
}

.mspair .rbtn + .rbtn {
    border-left: 1px solid #4a4a4a;
}

.vol {
    position: relative;
    width: 222px;
    height: 36px;
    margin-left: 11px;
    background: #3c3c3c;
    border-radius: 18px;
}

.vol-knob {
    position: absolute;
    left: 140px;
    top: 2px;
    width: 32px;
    height: 32px;
    border-radius: 50%;
    background: #9c9c9c;
}

.tknob {
    margin-left: 13px;
}

/* arrange timeline */
.timeline {
    position: relative;
    flex: 1;
    min-width: 0;
    overflow: hidden;
    background: #2e2e2e;
}

.ruler-top {
    display: flex;
    height: 38px;
    box-sizing: border-box;
    padding-left: 18px;
    background: repeating-linear-gradient(115deg, #383838 0 5px, #303030 5px 11px);
    border-bottom: 2px solid #1e1e1e;
}

.rbar {
    flex: none;
    width: 144px;
    box-sizing: border-box;
    height: 32px;
    margin-top: 6px;
    padding-left: 9px;
    border-left: 1px solid #8a8a8a;
    color: #c9c9c9;
    font-size: 24px;
    line-height: 27px;
}

.ruler-low {
    height: 38px;
    box-sizing: border-box;
    border-bottom: 1px solid #1e1e1e;
    background:
        repeating-linear-gradient(90deg, #777 0 1px, transparent 1px 72px) 18px 4px / 100% 100% no-repeat,
        repeating-linear-gradient(90deg, #777 0 1px, transparent 1px 12px) 18px 22px / 100% 100% no-repeat,
        #2e2e2e;
}

.lanes {
    height: 336px;
    background:
        repeating-linear-gradient(90deg, #4c4c4c 0 1px, transparent 1px 144px) 18px 0 / 100% 100% no-repeat,
        repeating-linear-gradient(90deg, #404040 0 1px, transparent 1px 72px) 18px 0 / 100% 100% no-repeat;
}

.cycle {
    position: absolute;
    left: 19px;
    top: 2px;
    width: 73px;
    height: 36px;
    box-sizing: border-box;
    padding-left: 6px;
    background: #b8933a;
    color: #111;
    font-size: 24px;
    line-height: 32px;
}

.cycle-tip {
    position: absolute;
    left: 0;
    top: 3px;
    width: 0;
    height: 0;
    border-left: 16px solid #5a5a5a;
    border-top: 14px solid transparent;
    border-bottom: 14px solid transparent;
}

.region {
    position: absolute;
    left: 18px;
    width: 97px;
    box-sizing: border-box;
    padding-left: 10px;
    background: #424242;
    border: 2px solid #111;
    border-radius: 8px;
    color: #7ce08c;
    font-size: 22px;
    line-height: 32px;
    white-space: nowrap;
    overflow: hidden;
}

.region.david {
    top: 72px;
    height: 90px;
    border-top: 0;
    border-radius: 0 0 8px 8px;
    line-height: 30px;
}

.region.jack {
    top: 264px;
    height: 94px;
}

.region.lynn {
    top: 166px;
    width: 70px;
    height: 93px;
    padding: 0;
    background: #1fa03c;
    border: 2px solid #f4d22e;
    border-radius: 8px;
    color: #222;
}

.lynn-head {
    height: 36px;
    padding-left: 9px;
    background: #fcd02a;
    line-height: 34px;
}

.dashes {
    position: absolute;
    left: 0;
    top: 76px;
}

.playline {
    position: absolute;
    left: 88px;
    top: 40px;
    width: 2px;
    bottom: 0;
    background: #f0d98c;
}

.playhead {
    position: absolute;
    left: 72px;
    top: 40px;
}

/* score editor */
.editor {
    display: flex;
    flex-direction: column;
    flex: 1;
    min-height: 0;
}

.tabs-wrap {
    flex: none;
    height: 80px;
    box-sizing: border-box;
    padding: 16px 0 0 539px;
    background: #484848;
    border-top: 2px solid #2e2e2e;
    border-bottom: 2px solid #3c3c3c;
}

.tabs {
    display: flex;
    align-items: center;
    width: 1025px;
    height: 44px;
    background: #3b3b3b;
    border-radius: 12px;
    font-size: 25.5px;
    color: #d0d0d0;
}

.tab {
    display: flex;
    align-items: center;
    justify-content: center;
    height: 40px;
    box-sizing: border-box;
    padding: 0 8px 2px 0;
}

.tab.on {
    background: #2c6db8;
    color: #fff;
    border-radius: 10px;
}

.tab.off {
    color: #646464;
}

.tab.line {
    border-left: 1px solid #454545;
}

.score-bar {
    height: 72px;
    padding: 16px 0 0 21px;
    background: #4a4a4a;
}

.score-top {
    display: flex;
    flex: none;
    height: 80px;
    box-sizing: border-box;
    background: #333;
    border-top: 2px solid #2a2a2a;
    border-bottom: 2px solid #222;
}

.score-corner {
    width: 80px;
    flex: none;
    background: #3a3a3a;
}

.score-ruler {
    flex: none;
    margin-top: -2px;
}

.rlab {
    fill: #cfcfcf;
    font: 24px "Inter", sans-serif;
}

.score-gap {
    flex: none;
    height: 60px;
    background: #323232;
}

.score-main {
    display: flex;
    flex: 1;
    min-height: 0;
    background: #323232;
}

.sheet {
    flex: none;
    display: block;
}

.score-rest {
    flex: 1;
}

.tsig {
    fill: #8a8a82;
    font: bold 98px "Liberation Serif", serif;
}
```
